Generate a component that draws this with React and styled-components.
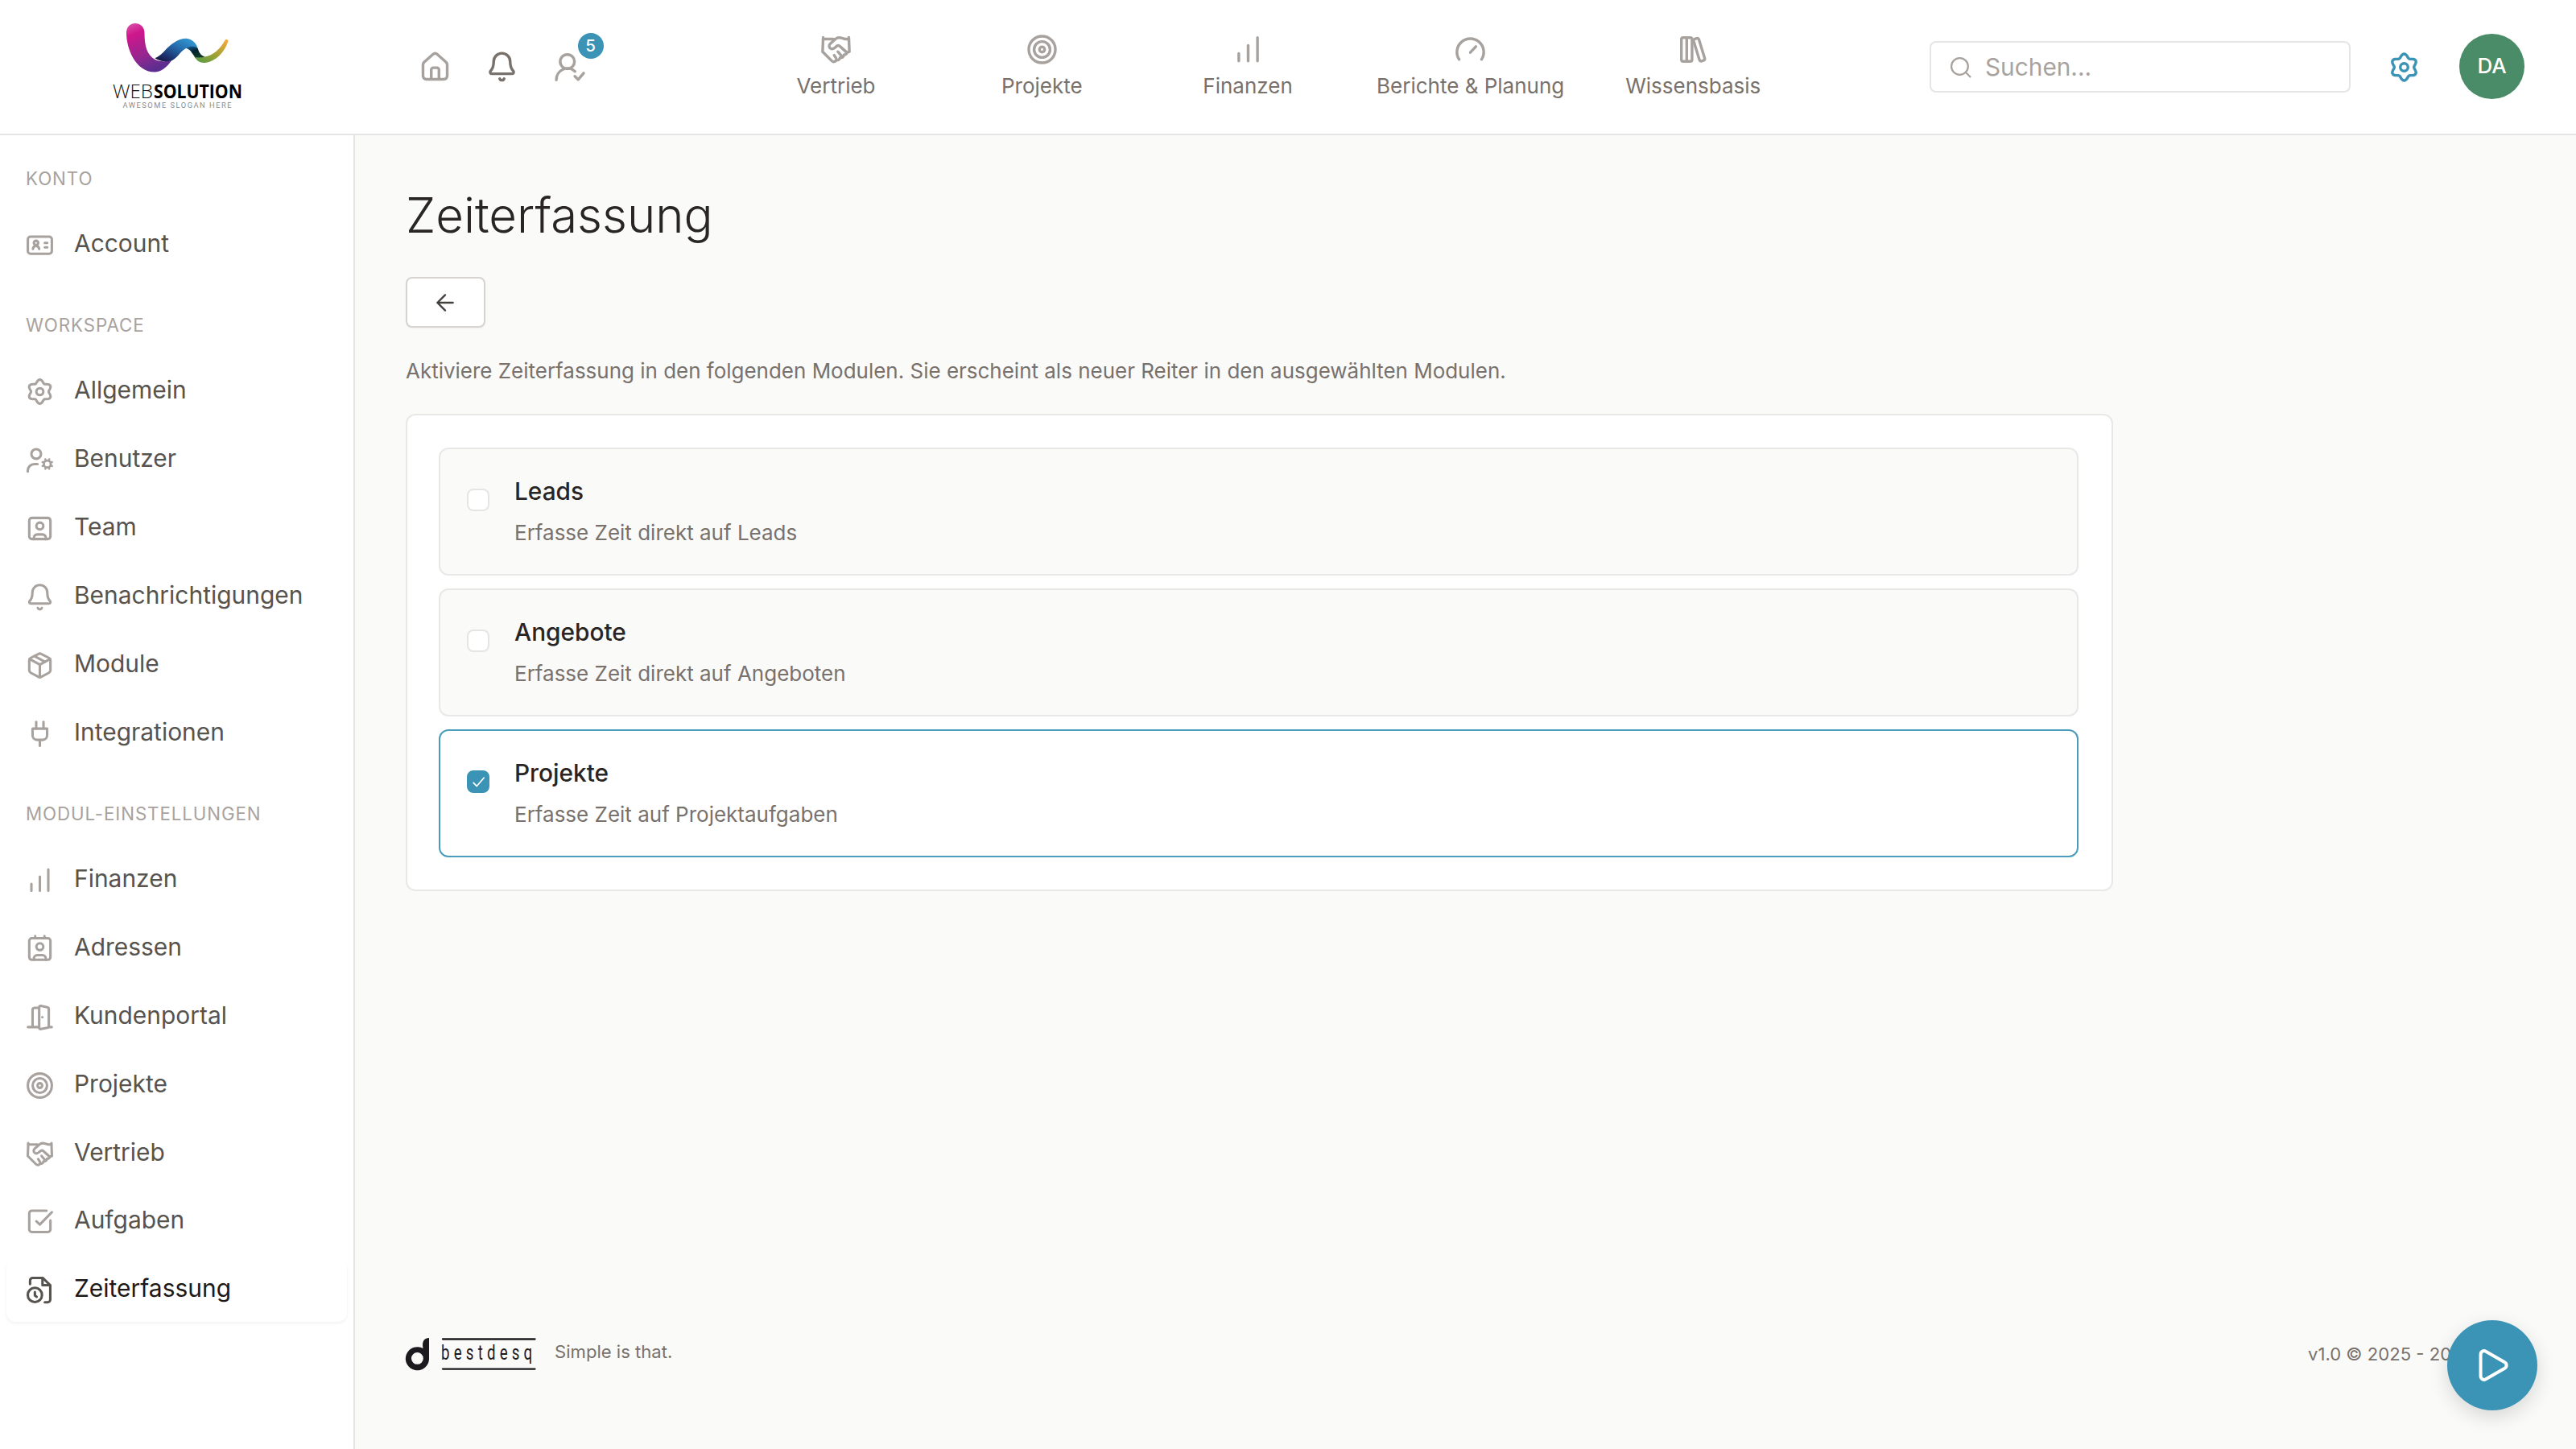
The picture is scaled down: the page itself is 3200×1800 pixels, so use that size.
import React from 'react';
import styled, { createGlobalStyle } from 'styled-components';

const GlobalStyle = createGlobalStyle`
  * {
    box-sizing: border-box;
  }

  body {
    margin: 0;
    background: #fafaf9;
    color: #57534e;
    font-family: Inter, 'Liberation Sans', sans-serif;
    overflow: hidden;
  }
`;

const Page = styled.div`
  display: flex;
  flex-direction: column;
  width: 3200px;
  height: 1800px;
`;

const Header = styled.header`
  display: flex;
  align-items: flex-start;
  flex: none;
  height: 168px;
  background: #fff;
  border-bottom: 2px solid #e7e5e4;
`;

const LogoLink = styled.a`
  width: 441px;
  height: 166px;
  padding-left: 130px;
`;

const QuickActions = styled.div`
  display: flex;
  gap: 42.5px;
  width: 488px;
  padding: 62px 0 0 78.5px;
`;

const QuickAction = styled.div`
  position: relative;
  width: 41px;
  height: 41px;
  color: ${(props) => (props.$strong ? '#78716c' : '#a8a29e')};
`;

const Badge = styled.span`
  position: absolute;
  top: -21px;
  right: -22px;
  width: 32px;
  height: 32px;
  border-radius: 50%;
  background: #3b93b5;
  color: #fff;
  font-size: 20.5px;
  font-weight: 500;
  line-height: 32px;
  text-align: center;
`;

const MainNav = styled.nav`
  display: flex;
  gap: 36.8px;
  padding-top: 41px;
`;

const NavItem = styled.a`
  display: flex;
  flex-direction: column;
  align-items: center;
  width: ${(props) => (props.$wide ? '260.5px' : '219px')};
  color: #a8a29e;
`;

const NavLabel = styled.span`
  margin-top: 7px;
  color: #78716c;
  font-size: 26px;
  line-height: 36px;
  white-space: nowrap;
`;

const SearchBox = styled.div`
  display: flex;
  align-items: center;
  gap: 17px;
  width: 523px;
  height: 64px;
  margin: 51px 46px 0 auto;
  padding-left: 23px;
  border: 2px solid #e7e5e4;
  border-radius: 8px;
  color: #a8a29e;
  font-size: 29.8px;
  line-height: 62px;
`;

const SettingsLink = styled.a`
  width: 41px;
  height: 41px;
  margin: 63px 48px 0 0;
  color: #3b93b5;
`;

const Avatar = styled.div`
  width: 81px;
  height: 81px;
  margin: 42px 64px 0 0;
  border-radius: 50%;
  background: #4a8b68;
  color: #fff;
  font-size: 26px;
  font-weight: 500;
  line-height: 80px;
  text-align: center;
`;

const Body = styled.div`
  display: flex;
  flex: 1;
  min-height: 0;
`;

const Sidebar = styled.aside`
  flex: none;
  width: 441px;
  padding: 0 8px;
  background: #fff;
  border-right: 2px solid #e7e5e4;
`;

const SectionLabel = styled.h2`
  margin: 0;
  padding: ${(props) => (props.$first ? '39px' : '38.5px')} 24px 0;
  height: ${(props) => (props.$first ? '98px' : '97.3px')};
  color: #a8a29e;
  font-size: 22.3px;
  font-weight: 400;
  line-height: 30px;
  letter-spacing: 0.9px;
  text-transform: uppercase;
`;

const SideItem = styled.a`
  display: flex;
  align-items: center;
  gap: 24px;
  height: 77.4px;
  margin-bottom: 7.5px;
  padding-left: 23px;
  border-radius: 12px;
  color: ${(props) => (props.$active ? '#57534e' : '#a8a29e')};
  box-shadow: ${(props) => (props.$active ? '0 2px 4px rgba(0, 0, 0, 0.06)' : 'none')};
`;

const SideLabel = styled.span`
  padding-bottom: 5px;
  color: ${(props) => (props.$active ? '#1c1917' : '#57534e')};
  font-size: 29.95px;
  line-height: 42px;
`;

const Main = styled.main`
  display: flex;
  flex-direction: column;
  flex: 1;
  padding: 62px 63px 0;
`;

const Title = styled.h1`
  margin: 0;
  color: #292524;
  font-size: 59.9px;
  font-weight: 300;
  line-height: 74px;
`;

const BackButton = styled.button`
  display: flex;
  align-items: center;
  justify-content: center;
  width: 99px;
  height: 63px;
  margin: 40px 0 0;
  padding: 0 2px 0 0;
  border: 2px solid #d6d3d1;
  border-radius: 8px;
  background: #fff;
  color: #44403c;
  box-shadow: 0 1px 2px rgba(0, 0, 0, 0.05);
`;

const Intro = styled.p`
  margin: 35px 0 0;
  color: #78716c;
  font-size: 25.97px;
  line-height: 38px;
`;

const Card = styled.section`
  display: flex;
  flex-direction: column;
  gap: 16.2px;
  width: 2121px;
  height: 593px;
  margin-top: 34px;
  padding: 39.5px 41px 39.5px 39px;
  border: 2px solid #e9e8e7;
  border-radius: 12px;
  background: #fff;
`;

const Option = styled.label`
  display: flex;
  flex: 1;
  align-items: flex-start;
  padding: 35px 33px 0;
  border: 2px solid ${(props) => (props.$checked ? '#4a9cbb' : '#e9e8e7')};
  border-radius: 12px;
  background: ${(props) => (props.$checked ? '#fff' : '#fafaf9')};
`;

const Checkbox = styled.span`
  display: flex;
  align-items: center;
  justify-content: center;
  width: 28px;
  height: 28px;
  margin: 14px 31px 0 0;
  border: 2px solid ${(props) => (props.$checked ? '#3b93b5' : '#e7e5e4')};
  border-radius: 8px;
  background: ${(props) => (props.$checked ? '#3b93b5' : '#fff')};
  color: #fff;
`;

const OptionTitle = styled.div`
  color: #292524;
  font-size: 29.8px;
  font-weight: 500;
  line-height: 34px;
`;

const OptionText = styled.div`
  margin-top: 15px;
  color: #78716c;
  font-size: 26px;
  line-height: 40px;
`;

const Footer = styled.footer`
  display: flex;
  align-items: center;
  height: 42px;
  margin-top: auto;
  margin-bottom: 97px;
  color: #78716c;
  font-size: 22.1px;
`;

const Slogan = styled.span`
  margin: -6px auto 0 22px;
`;

const Version = styled.span`
  width: 270px;
  white-space: nowrap;
`;

const PlayButton = styled.button`
  position: fixed;
  right: 48px;
  bottom: 48px;
  display: flex;
  align-items: center;
  justify-content: center;
  width: 112px;
  height: 112px;
  padding: 0 0 0 2px;
  border: 0;
  border-radius: 50%;
  background: #3b93b5;
  color: #fff;
  box-shadow: 0 8px 24px rgba(0, 0, 0, 0.14);
`;

const IconSvg = styled.svg`
  display: block;
  flex: none;
  overflow: visible;
`;

// six-lobed outline used by the settings gear
const gearPath = (() => {
  const points = [];
  for (let deg = 0; deg < 360; deg += 4) {
    const a = (deg * Math.PI) / 180;
    const r = 6.3 + 0.95 * Math.cos(6 * a);
    points.push(`${(9 + r * Math.sin(a)).toFixed(2)} ${(9 - r * Math.cos(a)).toFixed(2)}`);
  }
  return `M${points.join('L')}Z`;
})();

const icons = {
  home: (
    <>
      <path d="M2.4 8.1c0-.5.2-1 .6-1.4l4.8-4.3c.7-.6 1.7-.6 2.4 0L15 6.7c.4.4.6.9.6 1.4v6.1c0 1-.8 1.8-1.8 1.8H4.2c-1 0-1.8-.8-1.8-1.8z" />
      <path d="M6.9 16v-5.2c0-.6.5-1.1 1.1-1.1h2c.6 0 1.1.5 1.1 1.1V16" />
    </>
  ),
  bell: (
    <>
      <path d="M9 1.8a4.5 4.5 0 0 0-4.5 4.6c0 2.9-.8 4.2-1.7 5.1-.5.6-.1 1.5.7 1.5h11c.8 0 1.2-.9.7-1.5-.9-.9-1.7-2.2-1.7-5.1A4.5 4.5 0 0 0 9 1.8z" />
      <path d="M7.8 15.7c.2.5.6.8 1.2.8s1-.3 1.2-.8" />
    </>
  ),
  userCheck: (
    <>
      <circle cx="7.8" cy="6.4" r="3.9" />
      <path d="M1.8 16.4a6.1 6.1 0 0 1 10.2-4.7M11.9 14.4l1.8 1.8 3-3.5" />
    </>
  ),
  handshake: (
    <>
      <path d="M2 2.4 1.7 10.2l5 5c.8.8 2 .5 2.4-.4.9.3 1.9-.3 2.1-1.3 1 .2 2-.5 2.1-1.6.9 0 1.5-.5 1.7-1.2l1.3-.5L16 2.4" />
      <path d="M2 3.3h5.6M16 3.3h-2l-2-.6c-1.2-.4-2.4-.2-3.3.6L5.9 5.8c-.9.9-.8 2 .1 2.6.8.5 1.6.3 2.4-.4l1.1-.9c.6-.4 1.2-.3 1.7.2l3.8 3.4" />
      <path d="m8 12.1 1.1 1.7M10 10.2l2 2.3" />
    </>
  ),
  target: (
    <>
      <circle cx="9" cy="9" r="7.25" />
      <circle cx="9" cy="9" r="4.35" />
      <circle cx="9" cy="9" r="1.4" />
    </>
  ),
  bars: <path d="M3.9 11.2v4.1M9 6.8v8.5M14.1 2.5v12.8" />,
  gauge: (
    <>
      <path d="M2.9 14.4a7.3 7.3 0 1 1 12.2 0" />
      <path d="m9 10.6 3-3.2" />
    </>
  ),
  books: (
    <>
      <rect x="2.5" y="2.5" width="5.8" height="13" rx="1" />
      <path d="M5.4 2.5v13" />
      <rect x="10.7" y="2.8" width="3" height="12.6" rx="1" transform="rotate(-17 12.2 9.1)" />
    </>
  ),
  gear: (
    <>
      <path d={gearPath} />
      <circle cx="9" cy="9" r="2.1" />
    </>
  ),
  idCard: (
    <>
      <rect x="1.75" y="3.9" width="14.5" height="10.3" rx="1.6" />
      <circle cx="6.7" cy="7.7" r="1.3" />
      <path d="M4.8 11.3c.2-1.1.9-1.8 1.9-1.8s1.7.7 1.9 1.8M12 7.7h1.5M12 10.3h1.5" />
    </>
  ),
  userCog: (
    <>
      <circle cx="6.8" cy="5.3" r="2.9" />
      <path d="M1.7 15.9v-.5a4 4 0 0 1 4-4h1.9" />
      <circle cx="13.5" cy="11.4" r="2.1" strokeWidth="1.4" />
      <path
        strokeWidth="1.2"
        d="M14.6 8.8l.1-.3M16.1 10.3l.3-.1M16.1 12.5l.3.1M14.6 14l.1.3M12.4 14l-.1.3M10.9 12.5l-.3.1M10.9 10.3l-.3-.1M12.4 8.8l-.1-.3"
      />
    </>
  ),
  userSquare: (
    <>
      <rect x="2.6" y="2.6" width="12.8" height="12.8" rx="1.6" />
      <circle cx="9" cy="7.5" r="2.1" />
      <path d="M5.4 15.4v-.8c0-1.1.9-2 2-2h3.2c1.1 0 2 .9 2 2v.8" />
    </>
  ),
  box: (
    <>
      <path d="m8.2 2.1-4.7 2.4c-.5.3-.9.8-.9 1.4v6.2c0 .6.4 1.1.9 1.4l4.7 2.5c.5.3 1.1.3 1.6 0l4.7-2.5c.5-.3.9-.8.9-1.4V5.9c0-.6-.4-1.1-.9-1.4L9.8 2.1c-.5-.3-1.1-.3-1.6 0z" />
      <path d="M2.8 5.2 9 8.6l6.2-3.4M9 8.6V16M5.8 3.5l6.3 3.4" />
    </>
  ),
  plug: (
    <>
      <path d="M6.8 1.8v4M11.2 1.8v4M9 12.8v3.5" />
      <path d="M4.6 5.9h8.8V10c0 1.5-1.2 2.7-2.7 2.7H7.3A2.7 2.7 0 0 1 4.6 10z" />
    </>
  ),
  addressBook: (
    <>
      <rect x="2.6" y="2.7" width="12.8" height="13" rx="1.6" />
      <circle cx="9" cy="7.8" r="2.1" />
      <path d="M5.4 15.7v-.8c0-1.1.9-2 2-2h3.2c1.1 0 2 .9 2 2v.8M6.2 1.3v1.4M11.8 1.3v1.4" />
    </>
  ),
  door: (
    <>
      <path d="M1.8 15h6.8M14.4 15h1.8M4.6 15V4.6c0-.7.5-1.2 1.2-1.2h2.8" />
      <path d="M8.6 2.9v12.5c0 .5.5.9 1 .8l3.9-.8c.6-.1.9-.6.9-1.1V4.1c0-.5-.3-1-.9-1.1l-3.9-.8c-.5-.1-1 .2-1 .7z" />
      <circle cx="10.5" cy="9" r="0.75" fill="currentColor" stroke="none" />
    </>
  ),
  checkSquare: (
    <>
      <path d="M13 2.4H4.2c-.9 0-1.6.7-1.6 1.6v9.7c0 .9.7 1.6 1.6 1.6h9.6c.9 0 1.6-.7 1.6-1.6V8.3" />
      <path d="M6.9 8.8 9 10.8l7.3-7.5" />
    </>
  ),
  fileClock: (
    <>
      <path d="M3.1 5.4V3.3c0-.9.7-1.6 1.6-1.6h6.1l4.5 4.4v8.7c0 .9-.7 1.6-1.6 1.6H12" />
      <path d="M10.6 1.9v4.2h4.5" />
      <circle cx="6" cy="12" r="4.3" />
      <path d="M6 10.2v2.1l1.1.8" />
    </>
  ),
  search: (
    <>
      <circle cx="8.3" cy="8.3" r="6.900" />
      <path d="m13.200 13.200 3.800 3.800" />
    </>
  ),
  arrowLeft: <path d="M1.8 9h14.4M9 1.8 1.8 9 9 16.2" />,
  check: <path d="m3 9.8 3.9 4L15.3 4" />,
  play: <path d="M3.2 4v10c0 1.3 1.3 2.1 2.4 1.5l8.8-5.1c1.1-.6 1.1-2.2 0-2.8L5.6 2.5C4.5 1.9 3.2 2.7 3.2 4z" />,
};

function Icon({ name, size = 37, stroke = 1.5 }) {
  return (
    <IconSvg
      width={size}
      height={size}
      viewBox="0 0 18 18"
      fill="none"
      stroke="currentColor"
      strokeWidth={stroke}
      strokeLinecap="round"
      strokeLinejoin="round"
    >
      {icons[name]}
    </IconSvg>
  );
}

function WebsolutionLogo() {
  return (
    <IconSvg width="180" height="145" viewBox="130 0 180 145">
      <defs>
        <linearGradient id="pink" x1="0" y1="0" x2="0.4" y2="1">
          <stop offset="0" stopColor="#d957ae" />
          <stop offset="0.25" stopColor="#cf168c" />
          <stop offset="0.7" stopColor="#94278f" />
          <stop offset="1" stopColor="#5f2d90" />
        </linearGradient>
        <linearGradient id="blue" x1="0" y1="1" x2="1" y2="0">
          <stop offset="0" stopColor="#190a35" />
          <stop offset="0.3" stopColor="#1d3a78" />
          <stop offset="0.6" stopColor="#2671b1" />
          <stop offset="1" stopColor="#36a5dd" />
        </linearGradient>
        <linearGradient id="lime" x1="0" y1="1" x2="1" y2="0">
          <stop offset="0" stopColor="#4f9a46" />
          <stop offset="0.5" stopColor="#a3a233" />
          <stop offset="1" stopColor="#fbab3e" />
        </linearGradient>
        <linearGradient id="shade" x1="0" y1="0" x2="0.6" y2="1">
          <stop offset="0" stopColor="#12679b" />
          <stop offset="0.5" stopColor="#04202f" />
          <stop offset="1" stopColor="#0f3b25" />
        </linearGradient>
      </defs>
      <path
        fill="url(#pink)"
        d="M157 41c0-7 4-12 11-12s11.5 5 11.5 12c0 16 3 27 13 33 7 3 15 3 21.5 0-7 10-14 15.5-22 15.5-24 0-35-30-35-48.5z"
      />
      <path
        fill="url(#blue)"
        d="M192.4 72.3c8-3 12-10 19.2-16 6-5 12-8.6 19-8.6 7 0 13 5 15 12-4-2-9-2-13-.4-8 3-11 12-18.6 15.7-7 2-15 2-21.6-2.7z"
      />
      <path fill="url(#lime)" d="M241 70c3.5 2 9 2 13 .5 10-1 19-9 25.5-20.5 1-2 4-1 4 .8C279 66 266 78 253 78c-5 0-9-3-12-8z" />
      <path fill="url(#shade)" d="M231 59.8c5-3 11-2.5 14.6-.1 1.5 5 3.5 9 8.9 10.8-4 1.5-8.5 1.2-12 .8-4-4.5-5-9.5-11.5-11.5z" />
      <text x="140" y="121.5" fontFamily="Open Sans" fontSize="23.5" fontWeight="300" fill="#111" textLength="50" lengthAdjust="spacingAndGlyphs">
        WEB
      </text>
      <text x="191" y="121.5" fontFamily="Open Sans" fontSize="23.5" fontWeight="700" fill="#000" textLength="110" lengthAdjust="spacingAndGlyphs">
        SOLUTION
      </text>
      <text x="152.5" y="134" fontFamily="Roboto" fontSize="9.3" fill="#8c8c8c" textLength="135" lengthAdjust="spacing">
        AWESOME SLOGAN HERE
      </text>
    </IconSvg>
  );
}

function BestdesqLogo() {
  return (
    <IconSvg width="163" height="42" viewBox="0 0 163 42">
      <path
        fill="#1c1a1e"
        fillRule="evenodd"
        d="M29 1v26.500A14.600 14.600 0 1 1 21.500 14C20 7 22 1 29 1zM14.400 19a7.400 7.400 0 1 0 0 14.800 7.400 7.400 0 0 0 0-14.800z"
      />
      <path d="M46 2.5h114.500M46 39.600h114.500" stroke="#1c1a1e" strokeWidth="2.3" strokeLinecap="round" />
      <text
        transform="translate(44 28) scale(0.72 1)"
        fontFamily="Roboto"
        fontSize="26"
        fontWeight="400"
        fill="#1c1a1e"
        letterSpacing="7.2"
      >
        bestdesq
      </text>
    </IconSvg>
  );
}

const navItems = [
  { icon: 'handshake', label: 'Vertrieb' },
  { icon: 'target', label: 'Projekte' },
  { icon: 'bars', label: 'Finanzen' },
  { icon: 'gauge', label: 'Berichte & Planung', wide: true },
  { icon: 'books', label: 'Wissensbasis' },
];

const sections = [
  { title: 'Konto', items: [{ icon: 'idCard', label: 'Account' }] },
  {
    title: 'Workspace',
    items: [
      { icon: 'gear', label: 'Allgemein' },
      { icon: 'userCog', label: 'Benutzer' },
      { icon: 'userSquare', label: 'Team' },
      { icon: 'bell', label: 'Benachrichtigungen' },
      { icon: 'box', label: 'Module' },
      { icon: 'plug', label: 'Integrationen' },
    ],
  },
  {
    title: 'Modul-Einstellungen',
    items: [
      { icon: 'bars', label: 'Finanzen' },
      { icon: 'addressBook', label: 'Adressen' },
      { icon: 'door', label: 'Kundenportal' },
      { icon: 'target', label: 'Projekte' },
      { icon: 'handshake', label: 'Vertrieb' },
      { icon: 'checkSquare', label: 'Aufgaben' },
      { icon: 'fileClock', label: 'Zeiterfassung', active: true },
    ],
  },
];

const options = [
  { title: 'Leads', text: 'Erfasse Zeit direkt auf Leads' },
  { title: 'Angebote', text: 'Erfasse Zeit direkt auf Angeboten' },
  { title: 'Projekte', text: 'Erfasse Zeit auf Projektaufgaben', checked: true },
];

function App() {
  return (
    <Page>
      <GlobalStyle />
      <Header>
        <LogoLink>
          <WebsolutionLogo />
        </LogoLink>
        <QuickActions>
          <QuickAction>
            <Icon name="home" size={41} />
          </QuickAction>
          <QuickAction $strong>
            <Icon name="bell" size={41} />
          </QuickAction>
          <QuickAction>
            <Icon name="userCheck" size={41} />
            <Badge>5</Badge>
          </QuickAction>
        </QuickActions>
        <MainNav>
          {navItems.map((item) => (
            <NavItem key={item.label} $wide={item.wide}>
              <Icon name={item.icon} size={41} />
              <NavLabel>{item.label}</NavLabel>
            </NavItem>
          ))}
        </MainNav>
        <SearchBox>
          <Icon name="search" size={27} />
          Suchen...
        </SearchBox>
        <SettingsLink>
          <Icon name="gear" size={41} />
        </SettingsLink>
        <Avatar>DA</Avatar>
      </Header>
      <Body>
        <Sidebar>
          {sections.map((section, index) => (
            <React.Fragment key={section.title}>
              <SectionLabel $first={index === 0}>{section.title}</SectionLabel>
              {section.items.map((item) => (
                <SideItem key={item.label} $active={item.active}>
                  <Icon name={item.icon} />
                  <SideLabel $active={item.active}>{item.label}</SideLabel>
                </SideItem>
              ))}
            </React.Fragment>
          ))}
        </Sidebar>
        <Main>
          <Title>Zeiterfassung</Title>
          <BackButton aria-label="Zurück">
            <Icon name="arrowLeft" size={24} stroke={1.8} />
          </BackButton>
          <Intro>
            Aktiviere Zeiterfassung in den folgenden Modulen. Sie erscheint als neuer Reiter in den ausgewählten Modulen.
          </Intro>
          <Card>
            {options.map((option) => (
              <Option key={option.title} $checked={option.checked}>
                <Checkbox $checked={option.checked}>
                  {option.checked && <Icon name="check" size={19} stroke={1.6} />}
                </Checkbox>
                <div>
                  <OptionTitle>{option.title}</OptionTitle>
                  <OptionText>{option.text}</OptionText>
                </div>
              </Option>
            ))}
          </Card>
          <Footer>
            <BestdesqLogo />
            <Slogan>Simple is that.</Slogan>
            <Version>v1.0 © 2025 - 2026</Version>
          </Footer>
        </Main>
      </Body>
      <PlayButton aria-label="Start">
        <Icon name="play" size={48} />
      </PlayButton>
    </Page>
  );
}

export default App;
